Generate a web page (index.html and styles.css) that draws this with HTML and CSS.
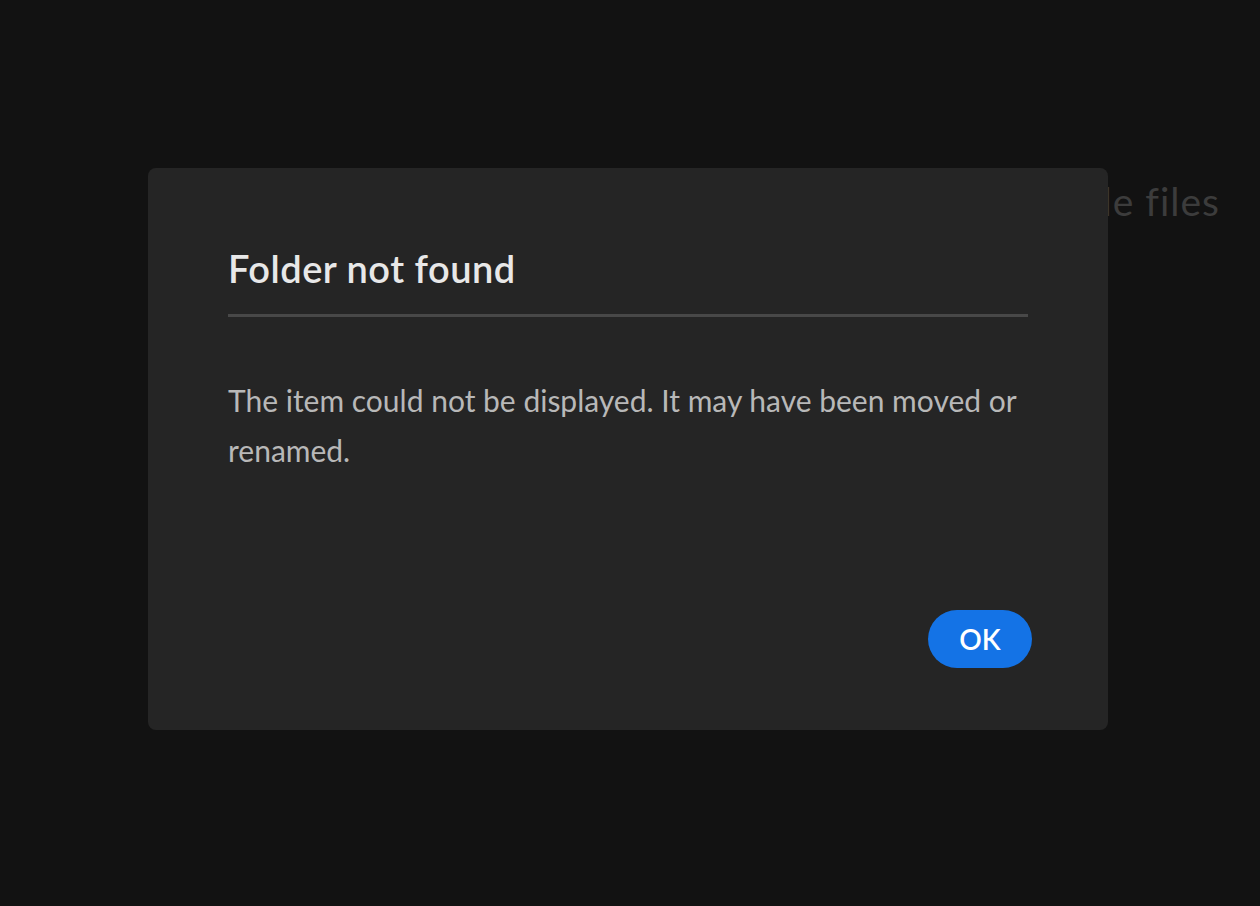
FILE: index.html
```html
<!DOCTYPE html>
<html lang="en">
<head>
    <meta charset="UTF-8">
    <link rel="stylesheet" href="styles.css">
</head>
<body>
    <div class="page">
        <div class="page-header">Choose sample files</div>
    </div>

    <div class="dialog" role="dialog">
        <div class="dialog-title">Folder not found</div>
        <div class="dialog-divider"></div>
        <div class="dialog-body">
            The item could not be displayed. It may have been moved or renamed.
        </div>
        <div class="dialog-buttons">
            <button class="dialog-ok">OK</button>
        </div>
    </div>
</body>
</html>
```

FILE: styles.css
```css
html, body {
    margin: 0;
    height: 100%;
}

body {
    background-color: #121212;
    font-family: Lato, "Open Sans", sans-serif;
    overflow: hidden;
}

.page {
    padding: 176px 40px 0 0;
}

.page-header {
    text-align: right;
    font-size: 39px;
    line-height: 50px;
    letter-spacing: 1px;
    color: #3c3c3c;
}

.dialog {
    position: absolute;
    left: 148px;
    top: 168px;
    width: 960px;
    height: 562px;
    box-sizing: border-box;
    padding: 76px 80px 62px 80px;
    background-color: #252525;
    border-radius: 8px;
    display: flex;
    flex-direction: column;
}

.dialog-title {
    font-size: 38px;
    font-weight: 600;
    line-height: 48px;
    letter-spacing: 0.5px;
    color: #e8e8e8;
}

.dialog-divider {
    height: 3px;
    margin-top: 22px;
    background-color: #484848;
}

.dialog-body {
    margin-top: 58px;
    font-size: 30px;
    line-height: 50px;
    color: #b8b8b8;
}

.dialog-buttons {
    margin-top: auto;
    display: flex;
    justify-content: flex-end;
    margin-right: -4px;
}

.dialog-ok {
    width: 104px;
    height: 58px;
    border: none;
    border-radius: 29px;
    background-color: #1473e6;
    color: #ffffff;
    font-family: Lato, "Open Sans", sans-serif;
    font-size: 28px;
    font-weight: 600;
    padding: 0;
    cursor: pointer;
}
```
